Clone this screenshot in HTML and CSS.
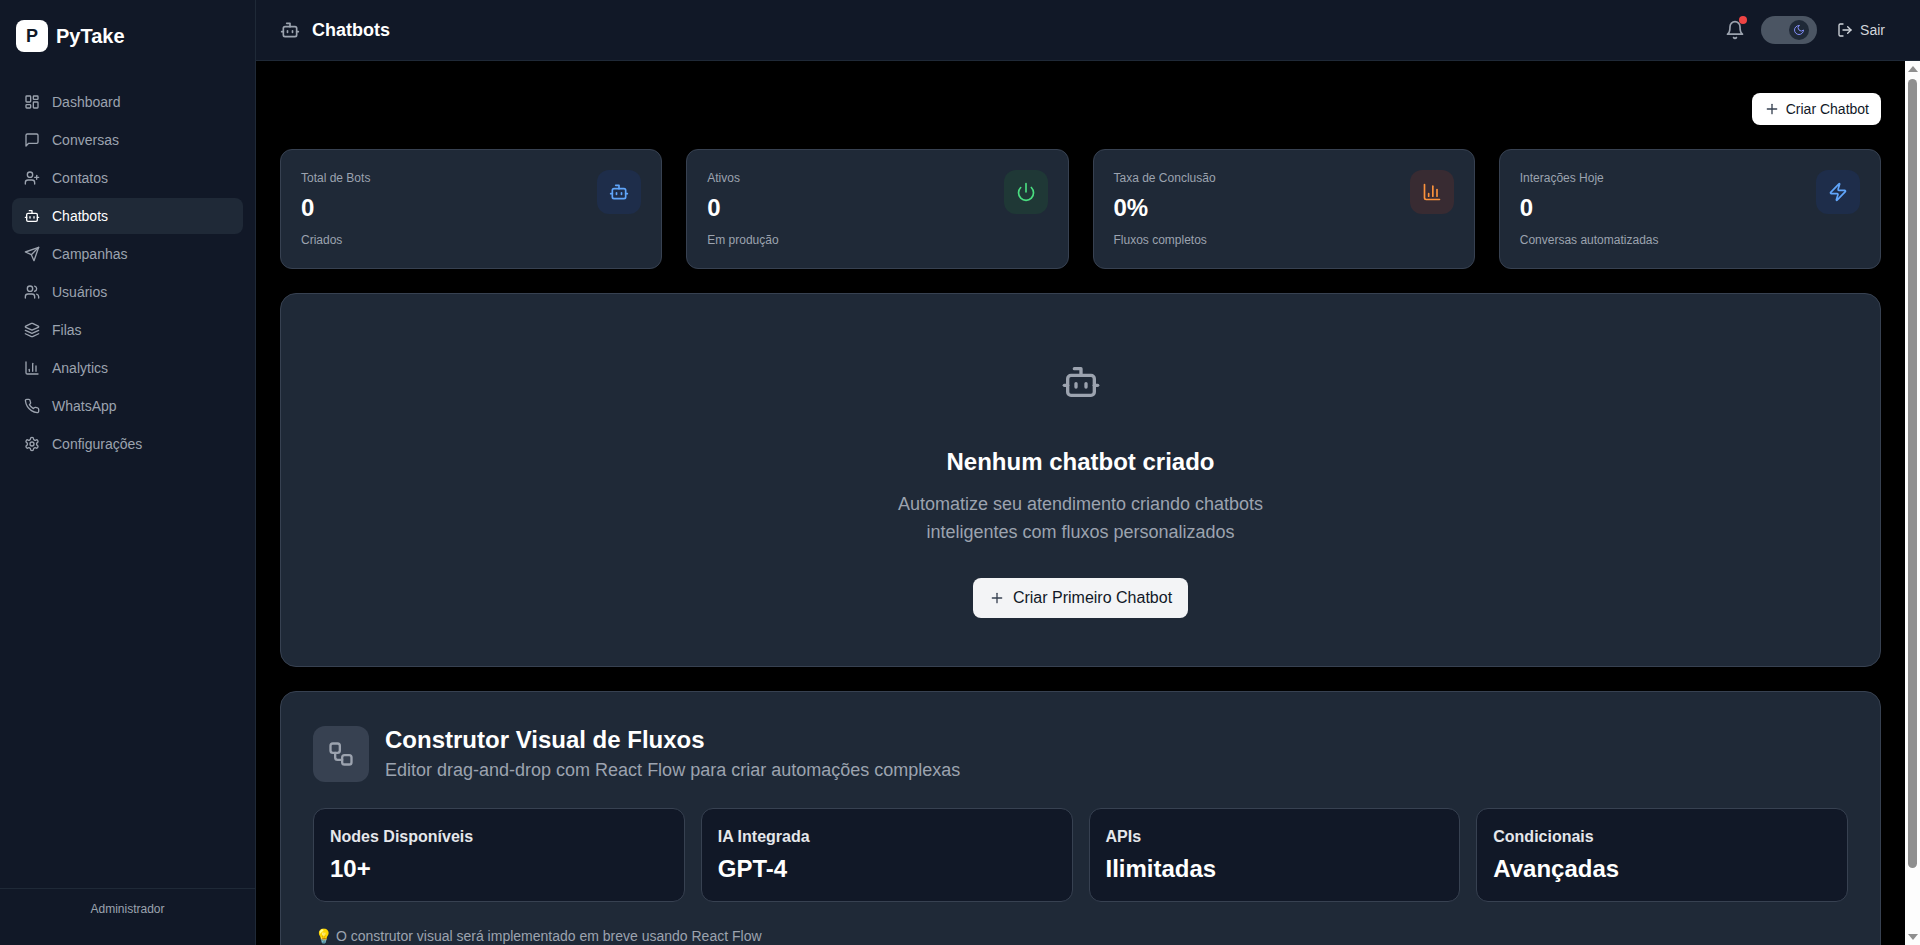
FILE: index.html
```html
<!DOCTYPE html>
<html lang="pt-BR">
<head>
  <meta charset="UTF-8">
  <meta name="viewport" content="width=device-width, initial-scale=1.0">
  <title>Chatbots - PyTake</title>
  <link rel="stylesheet" href="styles.css">
</head>
<body>

  <svg class="sprite" aria-hidden="true">
    <symbol id="i-dashboard" viewBox="0 0 24 24"><rect x="3" y="3" width="7" height="9" rx="1"/><rect x="14" y="3" width="7" height="5" rx="1"/><rect x="14" y="12" width="7" height="9" rx="1"/><rect x="3" y="16" width="7" height="5" rx="1"/></symbol>
    <symbol id="i-message" viewBox="0 0 24 24"><path d="M21 15a2 2 0 0 1-2 2H7l-4 4V5a2 2 0 0 1 2-2h14a2 2 0 0 1 2 2z"/></symbol>
    <symbol id="i-user-plus" viewBox="0 0 24 24"><path d="M16 21v-2a4 4 0 0 0-4-4H6a4 4 0 0 0-4 4v2"/><circle cx="9" cy="7" r="4"/><path d="M19 8v6"/><path d="M22 11h-6"/></symbol>
    <symbol id="i-bot" viewBox="0 0 24 24"><path d="M12 8V4H8"/><rect x="4" y="8" width="16" height="12" rx="2"/><path d="M2 14h2"/><path d="M20 14h2"/><path d="M15 13v2"/><path d="M9 13v2"/></symbol>
    <symbol id="i-send" viewBox="0 0 24 24"><path d="m22 2-7 20-4-9-9-4Z"/><path d="M22 2 11 13"/></symbol>
    <symbol id="i-users" viewBox="0 0 24 24"><path d="M16 21v-2a4 4 0 0 0-4-4H6a4 4 0 0 0-4 4v2"/><circle cx="9" cy="7" r="4"/><path d="M22 21v-2a4 4 0 0 0-3-3.87"/><path d="M16 3.13a4 4 0 0 1 0 7.75"/></symbol>
    <symbol id="i-layers" viewBox="0 0 24 24"><path d="m12.83 2.18a2 2 0 0 0-1.66 0L2.6 6.08a1 1 0 0 0 0 1.83l8.58 3.91a2 2 0 0 0 1.66 0l8.58-3.9a1 1 0 0 0 0-1.83Z"/><path d="m22 17.65-9.17 4.16a2 2 0 0 1-1.66 0L2 17.65"/><path d="m22 12.65-9.17 4.16a2 2 0 0 1-1.66 0L2 12.65"/></symbol>
    <symbol id="i-chart" viewBox="0 0 24 24"><path d="M3 3v16a2 2 0 0 0 2 2h16"/><path d="M18 17V9"/><path d="M13 17V5"/><path d="M8 17v-3"/></symbol>
    <symbol id="i-phone" viewBox="0 0 24 24"><path d="M22 16.92v3a2 2 0 0 1-2.18 2 19.79 19.79 0 0 1-8.63-3.07 19.5 19.5 0 0 1-6-6 19.79 19.79 0 0 1-3.07-8.67A2 2 0 0 1 4.11 2h3a2 2 0 0 1 2 1.72 12.84 12.84 0 0 0 .7 2.81 2 2 0 0 1-.45 2.11L8.09 9.91a16 16 0 0 0 6 6l1.27-1.27a2 2 0 0 1 2.11-.45 12.84 12.84 0 0 0 2.81.7A2 2 0 0 1 22 16.92z"/></symbol>
    <symbol id="i-settings" viewBox="0 0 24 24"><path d="M12.22 2h-.44a2 2 0 0 0-2 2v.18a2 2 0 0 1-1 1.73l-.43.25a2 2 0 0 1-2 0l-.15-.08a2 2 0 0 0-2.73.73l-.22.38a2 2 0 0 0 .73 2.73l.15.1a2 2 0 0 1 1 1.72v.51a2 2 0 0 1-1 1.74l-.15.09a2 2 0 0 0-.73 2.73l.22.38a2 2 0 0 0 2.73.73l.15-.08a2 2 0 0 1 2 0l.43.25a2 2 0 0 1 1 1.73V20a2 2 0 0 0 2 2h.44a2 2 0 0 0 2-2v-.18a2 2 0 0 1 1-1.73l.43-.25a2 2 0 0 1 2 0l.15.08a2 2 0 0 0 2.73-.73l.22-.39a2 2 0 0 0-.73-2.73l-.15-.08a2 2 0 0 1-1-1.74v-.5a2 2 0 0 1 1-1.74l.15-.09a2 2 0 0 0 .73-2.73l-.22-.38a2 2 0 0 0-2.73-.73l-.15.08a2 2 0 0 1-2 0l-.43-.25a2 2 0 0 1-1-1.73V4a2 2 0 0 0-2-2z"/><circle cx="12" cy="12" r="3"/></symbol>
    <symbol id="i-bell" viewBox="0 0 24 24"><path d="M6 8a6 6 0 0 1 12 0c0 7 3 9 3 9H3s3-2 3-9"/><path d="M10.3 21a1.94 1.94 0 0 0 3.4 0"/></symbol>
    <symbol id="i-moon" viewBox="0 0 24 24"><path d="M12 3a6 6 0 0 0 9 9 9 9 0 1 1-9-9Z"/></symbol>
    <symbol id="i-logout" viewBox="0 0 24 24"><path d="M9 21H5a2 2 0 0 1-2-2V5a2 2 0 0 1 2-2h4"/><path d="m16 17 5-5-5-5"/><path d="M21 12H9"/></symbol>
    <symbol id="i-plus" viewBox="0 0 24 24"><path d="M5 12h14"/><path d="M12 5v14"/></symbol>
    <symbol id="i-power" viewBox="0 0 24 24"><path d="M12 2v10"/><path d="M18.4 6.6a9 9 0 1 1-12.77.04"/></symbol>
    <symbol id="i-zap" viewBox="0 0 24 24"><path d="M4 14a1 1 0 0 1-.78-1.63l9.9-10.2a.5.5 0 0 1 .86.46l-1.92 6.02A1 1 0 0 0 13 10h7a1 1 0 0 1 .78 1.63l-9.9 10.2a.5.5 0 0 1-.86-.46l1.92-6.02A1 1 0 0 0 11 14z"/></symbol>
    <symbol id="i-workflow" viewBox="0 0 24 24"><rect x="3" y="3" width="8" height="8" rx="2"/><path d="M7 11v4a2 2 0 0 0 2 2h4"/><rect x="13" y="13" width="8" height="8" rx="2"/></symbol>
  </svg>

  <div class="app">
    <aside class="sidebar">
      <div class="brand">
        <span class="brand-logo">P</span>
        <span class="brand-name">PyTake</span>
      </div>
      <nav class="nav">
        <a class="nav-item"><svg class="icon"><use href="#i-dashboard"/></svg>Dashboard</a>
        <a class="nav-item"><svg class="icon"><use href="#i-message"/></svg>Conversas</a>
        <a class="nav-item"><svg class="icon"><use href="#i-user-plus"/></svg>Contatos</a>
        <a class="nav-item active"><svg class="icon"><use href="#i-bot"/></svg>Chatbots</a>
        <a class="nav-item"><svg class="icon"><use href="#i-send"/></svg>Campanhas</a>
        <a class="nav-item"><svg class="icon"><use href="#i-users"/></svg>Usuários</a>
        <a class="nav-item"><svg class="icon"><use href="#i-layers"/></svg>Filas</a>
        <a class="nav-item"><svg class="icon"><use href="#i-chart"/></svg>Analytics</a>
        <a class="nav-item"><svg class="icon"><use href="#i-phone"/></svg>WhatsApp</a>
        <a class="nav-item"><svg class="icon"><use href="#i-settings"/></svg>Configurações</a>
      </nav>
      <div class="sidebar-footer">Administrador</div>
    </aside>

    <div class="page">
      <header class="topbar">
        <div class="topbar-title">
          <svg class="icon icon-20 muted"><use href="#i-bot"/></svg>
          <h1>Chatbots</h1>
        </div>
        <div class="topbar-actions">
          <button class="bell">
            <svg class="icon icon-20"><use href="#i-bell"/></svg>
            <span class="bell-dot"></span>
          </button>
          <div class="theme-toggle">
            <span class="theme-knob"><svg class="icon icon-12"><use href="#i-moon"/></svg></span>
          </div>
          <button class="logout"><svg class="icon"><use href="#i-logout"/></svg>Sair</button>
        </div>
      </header>

      <div class="page-body">
        <main class="content">
          <div class="toolbar">
            <button class="btn btn-small"><svg class="icon"><use href="#i-plus"/></svg>Criar Chatbot</button>
          </div>

          <section class="stats">
            <div class="stat-card">
              <div class="stat-text">
                <p class="stat-label">Total de Bots</p>
                <p class="stat-value">0</p>
                <p class="stat-note">Criados</p>
              </div>
              <span class="stat-icon blue"><svg class="icon icon-20"><use href="#i-bot"/></svg></span>
            </div>
            <div class="stat-card">
              <div class="stat-text">
                <p class="stat-label">Ativos</p>
                <p class="stat-value">0</p>
                <p class="stat-note">Em produção</p>
              </div>
              <span class="stat-icon green"><svg class="icon icon-20"><use href="#i-power"/></svg></span>
            </div>
            <div class="stat-card">
              <div class="stat-text">
                <p class="stat-label">Taxa de Conclusão</p>
                <p class="stat-value">0%</p>
                <p class="stat-note">Fluxos completos</p>
              </div>
              <span class="stat-icon orange"><svg class="icon icon-20"><use href="#i-chart"/></svg></span>
            </div>
            <div class="stat-card">
              <div class="stat-text">
                <p class="stat-label">Interações Hoje</p>
                <p class="stat-value">0</p>
                <p class="stat-note">Conversas automatizadas</p>
              </div>
              <span class="stat-icon blue"><svg class="icon icon-20"><use href="#i-zap"/></svg></span>
            </div>
          </section>

          <section class="panel empty">
            <span class="empty-icon"><svg class="icon icon-40"><use href="#i-bot"/></svg></span>
            <h2>Nenhum chatbot criado</h2>
            <p>Automatize seu atendimento criando chatbots<br>inteligentes com fluxos personalizados</p>
            <button class="btn btn-large"><svg class="icon"><use href="#i-plus"/></svg>Criar Primeiro Chatbot</button>
          </section>

          <section class="panel builder">
            <div class="builder-head">
              <span class="builder-icon"><svg class="icon icon-28"><use href="#i-workflow"/></svg></span>
              <div>
                <h2>Construtor Visual de Fluxos</h2>
                <p>Editor drag-and-drop com React Flow para criar automações complexas</p>
              </div>
            </div>
            <div class="features">
              <div class="feature"><p class="feature-label">Nodes Disponíveis</p><p class="feature-value">10+</p></div>
              <div class="feature"><p class="feature-label">IA Integrada</p><p class="feature-value">GPT-4</p></div>
              <div class="feature"><p class="feature-label">APIs</p><p class="feature-value">Ilimitadas</p></div>
              <div class="feature"><p class="feature-label">Condicionais</p><p class="feature-value">Avançadas</p></div>
            </div>
            <p class="builder-note">💡 O construtor visual será implementado em breve usando React Flow</p>
          </section>
        </main>

        <div class="scrollbar" aria-hidden="true">
          <span class="scroll-arrow up"></span>
          <div class="scroll-track"><span class="scroll-thumb"></span></div>
          <span class="scroll-arrow down"></span>
        </div>
      </div>
    </div>
  </div>

</body>
</html>
```

FILE: styles.css
```css
* {
  box-sizing: border-box;
}

body {
  margin: 0;
  height: 100vh;
  overflow: hidden;
  background: #000;
  color: #fff;
  font-family: "Liberation Sans", Arial, sans-serif;
}

h1, h2, p {
  margin: 0;
}

button {
  font-family: inherit;
  border: none;
  background: none;
  cursor: pointer;
}

.sprite {
  display: none;
}

.icon {
  width: 16px;
  height: 16px;
  flex-shrink: 0;
  fill: none;
  stroke: currentColor;
  stroke-width: 2;
  stroke-linecap: round;
  stroke-linejoin: round;
}

.icon-12 { width: 12px; height: 12px; }
.icon-20 { width: 20px; height: 20px; }
.icon-28 { width: 28px; height: 28px; }
.icon-40 { width: 40px; height: 40px; }

.muted {
  color: #9ca3af;
}

.app {
  display: flex;
  height: 100vh;
}

/* sidebar */
.sidebar {
  width: 256px;
  flex-shrink: 0;
  display: flex;
  flex-direction: column;
  background: #111827;
  border-right: 1px solid #1f2937;
}

.brand {
  display: flex;
  align-items: center;
  gap: 8px;
  padding: 20px 16px;
}

.brand-logo {
  width: 32px;
  height: 32px;
  display: flex;
  align-items: center;
  justify-content: center;
  border-radius: 8px;
  background: #fff;
  color: #111827;
  font-size: 18px;
  font-weight: 700;
}

.brand-name {
  font-size: 20px;
  font-weight: 700;
}

.nav {
  flex: 1;
  display: flex;
  flex-direction: column;
  gap: 2px;
  padding: 12px 12px 0;
}

.nav-item {
  height: 36px;
  display: flex;
  align-items: center;
  gap: 12px;
  padding: 0 12px;
  border-radius: 8px;
  font-size: 14px;
  color: #9ca3af;
}

.nav-item.active {
  background: #1f2937;
  color: #fff;
}

.sidebar-footer {
  padding: 12px 16px 28px;
  border-top: 1px solid #1f2937;
  font-size: 12px;
  line-height: 16px;
  text-align: center;
  color: #9ca3af;
}

/* top bar */
.page {
  flex: 1;
  min-width: 0;
  display: flex;
  flex-direction: column;
}

.topbar {
  height: 61px;
  flex-shrink: 0;
  display: flex;
  align-items: center;
  justify-content: space-between;
  padding: 0 24px;
  background: #111827;
  border-bottom: 1px solid #1f2937;
}

.topbar-title {
  display: flex;
  align-items: center;
  gap: 12px;
}

.topbar-title h1 {
  font-size: 18px;
  font-weight: 700;
}

.topbar-actions {
  display: flex;
  align-items: center;
  gap: 8px;
}

.bell {
  position: relative;
  width: 36px;
  height: 36px;
  display: flex;
  align-items: center;
  justify-content: center;
  color: #9ca3af;
}

.bell-dot {
  position: absolute;
  top: 4px;
  right: 6px;
  width: 8px;
  height: 8px;
  border-radius: 50%;
  background: #ef4444;
}

.theme-toggle {
  width: 56px;
  height: 28px;
  display: flex;
  align-items: center;
  justify-content: flex-end;
  padding-right: 8px;
  border-radius: 14px;
  background: #4b5563;
}

.theme-knob {
  width: 20px;
  height: 20px;
  display: flex;
  align-items: center;
  justify-content: center;
  border-radius: 50%;
  background: #1f2937;
  color: #818cf8;
}

.logout {
  height: 36px;
  display: flex;
  align-items: center;
  gap: 7px;
  padding: 0 11px 0 12px;
  font-size: 14px;
  color: #d1d5db;
}

/* content */
.page-body {
  flex: 1;
  min-height: 0;
  display: flex;
}

.content {
  flex: 1;
  min-width: 0;
  overflow: hidden;
  display: flex;
  flex-direction: column;
  gap: 24px;
  padding: 32px 24px;
  background: #000;
}

.content > * {
  flex-shrink: 0;
}

/* window scrollbar, the headless browser does not draw one */
.scrollbar {
  width: 15px;
  flex-shrink: 0;
  display: flex;
  flex-direction: column;
  align-items: center;
  background: #fdfdfd;
}

.scroll-arrow {
  height: 17px;
  flex-shrink: 0;
  border-left: 5px solid transparent;
  border-right: 5px solid transparent;
}

.scroll-arrow.up {
  margin-top: 5px;
  height: 0;
  border-bottom: 6px solid #8f8f8f;
  margin-bottom: 6px;
}

.scroll-arrow.down {
  height: 0;
  border-top: 6px solid #8f8f8f;
  margin-top: 6px;
  margin-bottom: 5px;
}

.scroll-track {
  flex: 1;
  width: 100%;
  display: flex;
  justify-content: center;
  padding-top: 1px;
}

.scroll-thumb {
  width: 9px;
  height: 789px;
  border-radius: 5px;
  background: #8f8f8f;
}

.toolbar {
  display: flex;
  justify-content: flex-end;
}

.btn {
  display: flex;
  align-items: center;
  border-radius: 8px;
  color: #111827;
}

.btn .icon {
  color: #374151;
}

.btn-small {
  height: 32px;
  gap: 6px;
  padding: 0 12px;
  font-size: 14px;
  background: #fff;
}

.btn-large {
  height: 40px;
  gap: 8px;
  padding: 0 16px;
  font-size: 16px;
  background: #f3f4f6;
}

.stats {
  display: grid;
  grid-template-columns: repeat(4, 1fr);
  gap: 24px;
}

.stat-card {
  display: flex;
  justify-content: space-between;
  padding: 20px;
  border: 1px solid #374151;
  border-radius: 12px;
  background: #1f2937;
}

.stat-label,
.stat-note {
  font-size: 12px;
  line-height: 16px;
  color: #9ca3af;
}

.stat-value {
  margin: 6px 0 8px;
  font-size: 24px;
  line-height: 32px;
  font-weight: 700;
}

.stat-icon {
  width: 44px;
  height: 44px;
  display: flex;
  align-items: center;
  justify-content: center;
  border-radius: 12px;
}

.stat-icon.blue {
  background: #1e2d4a;
  color: #60a5fa;
}

.stat-icon.green {
  background: #1f3836;
  color: #4ade80;
}

.stat-icon.orange {
  background: #382b32;
  color: #fb923c;
}

.panel {
  border: 1px solid #374151;
  border-radius: 16px;
  background: #1f2937;
}

.empty {
  display: flex;
  flex-direction: column;
  align-items: center;
  padding: 48px;
  text-align: center;
}

.empty-icon {
  width: 80px;
  height: 80px;
  display: flex;
  align-items: center;
  justify-content: center;
  margin-bottom: 24px;
  color: #9ca3af;
}

.empty h2 {
  font-size: 24px;
  line-height: 32px;
  font-weight: 700;
}

.empty p {
  margin: 12px 0 32px;
  font-size: 18px;
  line-height: 28px;
  color: #9ca3af;
}

.builder {
  padding: 32px;
}

.builder-head {
  display: flex;
  align-items: center;
  gap: 16px;
  margin-bottom: 24px;
}

.builder-icon {
  width: 56px;
  height: 56px;
  display: flex;
  align-items: center;
  justify-content: center;
  border-radius: 12px;
  background: #374151;
  color: #9ca3af;
}

.builder-head h2 {
  font-size: 24px;
  line-height: 32px;
  font-weight: 700;
}

.builder-head p {
  font-size: 18px;
  line-height: 28px;
  color: #9ca3af;
}

.features {
  display: grid;
  grid-template-columns: repeat(4, 1fr);
  gap: 16px;
}

.feature {
  padding: 16px;
  border: 1px solid #374151;
  border-radius: 12px;
  background: #111827;
}

.feature-label {
  font-size: 16px;
  line-height: 24px;
  font-weight: 700;
  color: #e5e7eb;
}

.feature-value {
  margin-top: 4px;
  font-size: 24px;
  line-height: 32px;
  font-weight: 700;
}

.builder-note {
  margin-top: 24px;
  padding-left: 2px;
  font-size: 14px;
  line-height: 20px;
  color: #9ca3af;
}
```
